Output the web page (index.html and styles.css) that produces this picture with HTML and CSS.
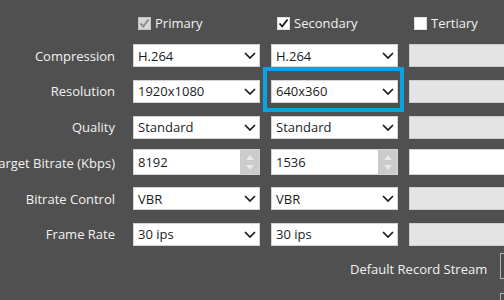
FILE: index.html
```html
<!DOCTYPE html>
<html>
<head>
<meta charset="utf-8">
<link rel="stylesheet" href="styles.css">
</head>
<body>
<div class="panel">
  <div class="head">
    <div></div>
    <label class="chk"><span class="box disabled"><svg viewBox="0 0 13 13" width="13" height="13"><polyline points="2.5,6.5 5.2,9.5 10.5,2.5" fill="none" stroke="#8c8c8c" stroke-width="2"/></svg></span>Primary</label>
    <label class="chk sec"><span class="box"><svg viewBox="0 0 13 13" width="13" height="13"><polyline points="2.5,6.5 5.2,9.5 10.5,2.5" fill="none" stroke="#111" stroke-width="1.7"/></svg></span>Secondary</label>
    <label class="chk"><span class="box"></span>Tertiary</label>
  </div>
  <div class="grid">
    <div class="lbl">Compression</div>
    <div class="combo"><span>H.264</span><svg class="chev" viewBox="0 0 12 7" width="12" height="7"><polyline points="1,1 6,6 11,1" fill="none" stroke="#1a1a1a" stroke-width="1.7"/></svg></div>
    <div class="combo"><span>H.264</span><svg class="chev" viewBox="0 0 12 7" width="12" height="7"><polyline points="1,1 6,6 11,1" fill="none" stroke="#1a1a1a" stroke-width="1.7"/></svg></div>
    <div class="off"></div>

    <div class="lbl">Resolution</div>
    <div class="combo"><span>1920x1080</span><svg class="chev" viewBox="0 0 12 7" width="12" height="7"><polyline points="1,1 6,6 11,1" fill="none" stroke="#1a1a1a" stroke-width="1.7"/></svg></div>
    <div class="combo hl"><span>640x360</span><svg class="chev" viewBox="0 0 12 7" width="12" height="7"><polyline points="1,1 6,6 11,1" fill="none" stroke="#1a1a1a" stroke-width="1.7"/></svg><div class="focus"></div></div>
    <div class="off"></div>

    <div class="lbl">Quality</div>
    <div class="combo"><span>Standard</span><svg class="chev" viewBox="0 0 12 7" width="12" height="7"><polyline points="1,1 6,6 11,1" fill="none" stroke="#1a1a1a" stroke-width="1.7"/></svg></div>
    <div class="combo"><span>Standard</span><svg class="chev" viewBox="0 0 12 7" width="12" height="7"><polyline points="1,1 6,6 11,1" fill="none" stroke="#1a1a1a" stroke-width="1.7"/></svg></div>
    <div class="off"></div>

    <div class="lbl">Target Bitrate (Kbps)</div>
    <div class="spin"><span>8192</span><div class="btns"><svg viewBox="0 0 8 5" width="8" height="5"><polygon points="0,5 4,0 8,5" fill="#e9e9e9"/></svg><svg viewBox="0 0 8 5" width="8" height="5"><polygon points="0,0 8,0 4,5" fill="#e9e9e9"/></svg></div></div>
    <div class="spin"><span>1536</span><div class="btns"><svg viewBox="0 0 8 5" width="8" height="5"><polygon points="0,5 4,0 8,5" fill="#e9e9e9"/></svg><svg viewBox="0 0 8 5" width="8" height="5"><polygon points="0,0 8,0 4,5" fill="#e9e9e9"/></svg></div></div>
    <div class="spin blank"></div>

    <div class="lbl">Bitrate Control</div>
    <div class="combo"><span>VBR</span><svg class="chev" viewBox="0 0 12 7" width="12" height="7"><polyline points="1,1 6,6 11,1" fill="none" stroke="#1a1a1a" stroke-width="1.7"/></svg></div>
    <div class="combo"><span>VBR</span><svg class="chev" viewBox="0 0 12 7" width="12" height="7"><polyline points="1,1 6,6 11,1" fill="none" stroke="#1a1a1a" stroke-width="1.7"/></svg></div>
    <div class="off"></div>

    <div class="lbl">Frame Rate</div>
    <div class="combo"><span>30 ips</span><svg class="chev" viewBox="0 0 12 7" width="12" height="7"><polyline points="1,1 6,6 11,1" fill="none" stroke="#1a1a1a" stroke-width="1.7"/></svg></div>
    <div class="combo"><span>30 ips</span><svg class="chev" viewBox="0 0 12 7" width="12" height="7"><polyline points="1,1 6,6 11,1" fill="none" stroke="#1a1a1a" stroke-width="1.7"/></svg></div>
    <div class="off"></div>
  </div>
  <div class="record">
    <span class="rlbl">Default Record Stream</span>
    <div class="rfields">
      <div class="rbox"></div>
      <div class="rbox"></div>
    </div>
  </div>
</div>
</body>
</html>
```
FILE: styles.css
```css
html, body {
  margin: 0;
  padding: 0;
  width: 504px;
  height: 300px;
  overflow: hidden;
  background: #505050;
}
.panel {
  font-family: "Open Sans", "Noto Sans", sans-serif;
  font-size: 13px;
  color: #f2f2f2;
  padding-top: 16px;
}
.head {
  display: grid;
  grid-template-columns: 122px 127px 127px 127px;
  column-gap: 11px;
  height: 14px;
  margin-bottom: 14px;
}
.chk {
  display: flex;
  align-items: center;
  gap: 4px;
  padding-left: 5px;
  white-space: nowrap;
  line-height: 14px;
}
.chk.sec { padding-left: 6px; }
.box {
  width: 13px;
  height: 13px;
  box-sizing: border-box;
  background: #ffffff;
  border: 1px solid #e0e0e0;
  display: flex;
  align-items: center;
  justify-content: center;
  flex: none;
}
.box svg { margin: -1px; }
.box.disabled {
  background: #d6d6d6;
  border-color: #c4c4c4;
}
.grid {
  display: grid;
  grid-template-columns: 122px 127px 127px 127px;
  grid-auto-rows: 23px;
  column-gap: 11px;
  row-gap: 12.8px;
}
.lbl {
  display: flex;
  justify-content: flex-end;
  align-items: center;
  padding-right: 7px;
  white-space: nowrap;
}
.combo, .spin, .off {
  box-sizing: border-box;
  border: 1px solid #d4d4d4;
  background: #ffffff;
  color: #1c1c1c;
  display: flex;
  align-items: center;
  position: relative;
}
.combo span, .spin span {
  flex: 1;
  padding-left: 4px;
  white-space: nowrap;
}
.chev {
  margin-right: 3px;
  flex: none;
}
.off {
  background: #e4e4e4;
  border-color: #cdcdcd;
}
.spin {
  height: 26px;
  margin: -2px 0 -1px;
  align-self: start;
}
.btns {
  width: 19px;
  align-self: stretch;
  background: #cbcbcb;
  display: flex;
  flex-direction: column;
  align-items: center;
  justify-content: center;
  gap: 5px;
}
.focus {
  position: absolute;
  left: -9px;
  top: -14px;
  width: 141px;
  height: 45px;
  box-sizing: border-box;
  border: 4px solid #0ba3e4;
  pointer-events: none;
}
.record {
  display: flex;
  align-items: flex-start;
  gap: 13px;
  padding-left: 350px;
  margin-top: 7px;
}
.rlbl {
  white-space: nowrap;
  margin-top: 7px;
}
.rfields {
  display: flex;
  flex-direction: column;
  gap: 14px;
  flex: none;
}
.rbox {
  width: 120px;
  height: 26px;
  box-sizing: border-box;
  border: 1px solid #b4b4b4;
  background: #4a4a4a;
}
```
